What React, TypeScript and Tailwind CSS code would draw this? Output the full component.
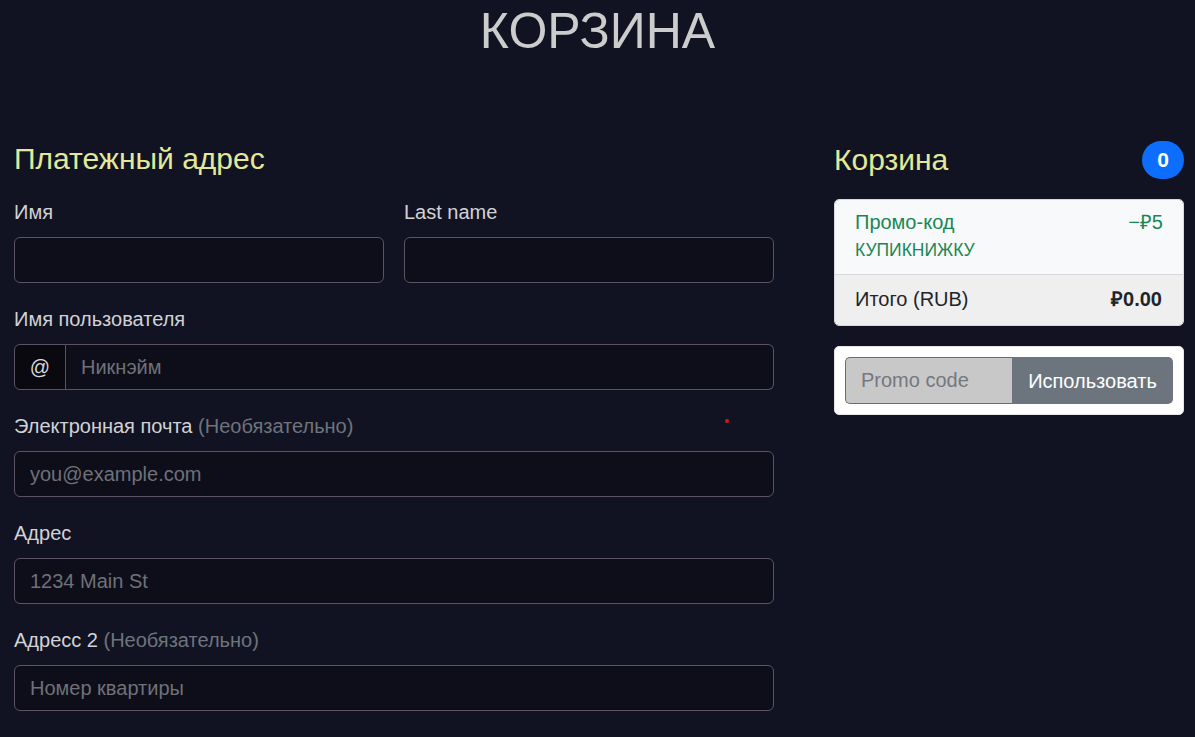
import React from "react";

const inputCls =
  "block w-full h-[46px] rounded-[6px] border border-[#5c5266] bg-[#0e0e1a] px-[15px] text-[20px] text-[#d0d0d0] placeholder:text-[#6e7178] outline-none";

function Label({ children, optional }: { children: React.ReactNode; optional?: boolean }) {
  return (
    <label className="block h-[30px] mb-[10px] leading-[30px] text-[20px] text-[#d2d2d6]">
      {children}
      {optional && <span className="text-[#6f737b]"> (Необязательно)</span>}
    </label>
  );
}

export default function App() {
  return (
    <div className="relative min-h-screen bg-[#111322] font-['Liberation_Sans',Arial,sans-serif] text-[20px]">
      <h1 className="pt-[1px] text-center text-[50px] leading-[60px] text-[#cccccc] mb-[80px]">КОРЗИНА</h1>
      <div className="flex gap-[60px] pl-[14px]">
        <div className="w-[760px]">
          <h4 className="text-[30px] leading-[36px] text-[#e3e99a] mb-[20px]">Платежный адрес</h4>
          <div className="grid grid-cols-2 gap-x-[20px] gap-y-[21px]">
            <div>
              <Label>Имя</Label>
              <input className={inputCls} />
            </div>
            <div>
              <Label>Last name</Label>
              <input className={inputCls} />
            </div>
            <div className="col-span-2">
              <Label>Имя пользователя</Label>
              <div className="flex h-[46px]">
                <span className="flex w-[52px] items-center justify-center rounded-l-[6px] border border-[#5c5266] bg-[#09090f] text-[20px] text-[#d8d8d8]">
                  @
                </span>
                <input
                  className="block h-[46px] flex-1 rounded-r-[6px] border border-l-0 border-[#5c5266] bg-[#0e0e1a] px-[15px] text-[20px] text-[#d0d0d0] placeholder:text-[#6e7178] outline-none"
                  placeholder="Никнэйм"
                />
              </div>
            </div>
            <div className="col-span-2">
              <Label optional>Электронная почта</Label>
              <input className={inputCls} placeholder="you@example.com" />
            </div>
            <div className="col-span-2">
              <Label>Адрес</Label>
              <input className={inputCls} placeholder="1234 Main St" />
            </div>
            <div className="col-span-2">
              <Label optional>Адресс 2</Label>
              <input className={inputCls} placeholder="Номер квартиры" />
            </div>
          </div>
        </div>
        <div className="w-[350px]">
          <div className="flex h-[38px] items-center justify-between mb-[20px]">
            <h4 className="text-[30px] leading-[36px] text-[#e3e99a]">Корзина</h4>
            <span className="flex h-[38px] w-[42px] items-center justify-center rounded-full bg-[#0d6efd] text-[21px] font-bold text-white">
              0
            </span>
          </div>
          <div className="overflow-hidden rounded-[5px] border border-[#d6d8db]">
            <div className="flex justify-between bg-[#f8f9fa] px-[20px] pt-[7px] pb-[11px] text-[#198754]">
              <div>
                <h6 className="text-[20px] leading-[30px]">Промо-код</h6>
                <small className="block text-[17.5px] leading-[26px]">КУПИКНИЖКУ</small>
              </div>
              <span className="leading-[30px]">−₽5</span>
            </div>
            <div className="flex justify-between border-t border-[#d6d8db] bg-[#efefef] pl-[20px] pr-[21px] pt-[9px] pb-[11px] text-[#212529]">
              <span className="leading-[30px]">Итого (RUB)</span>
              <strong className="leading-[30px]">₽0.00</strong>
            </div>
          </div>
          <div className="mt-[20px] rounded-[5px] border border-[#e5e5e5] bg-white p-[10px]">
            <div className="flex h-[47px]">
              <input
                className="block h-full w-[167px] rounded-l-[5px] border border-r-0 border-[#6c6c6c] bg-[#c8c8c8] px-[15px] text-[20px] text-[#333] placeholder:text-[#737880] outline-none"
                placeholder="Promo code"
              />
              <button className="h-full flex-1 rounded-r-[5px] bg-[#6c757d] text-[20px] text-white">
                Использовать
              </button>
            </div>
          </div>
        </div>
      </div>
      <div className="absolute left-[725px] top-[419px] h-[4px] w-[4px] rounded-full bg-[#e3101e]" />
    </div>
  );
}
